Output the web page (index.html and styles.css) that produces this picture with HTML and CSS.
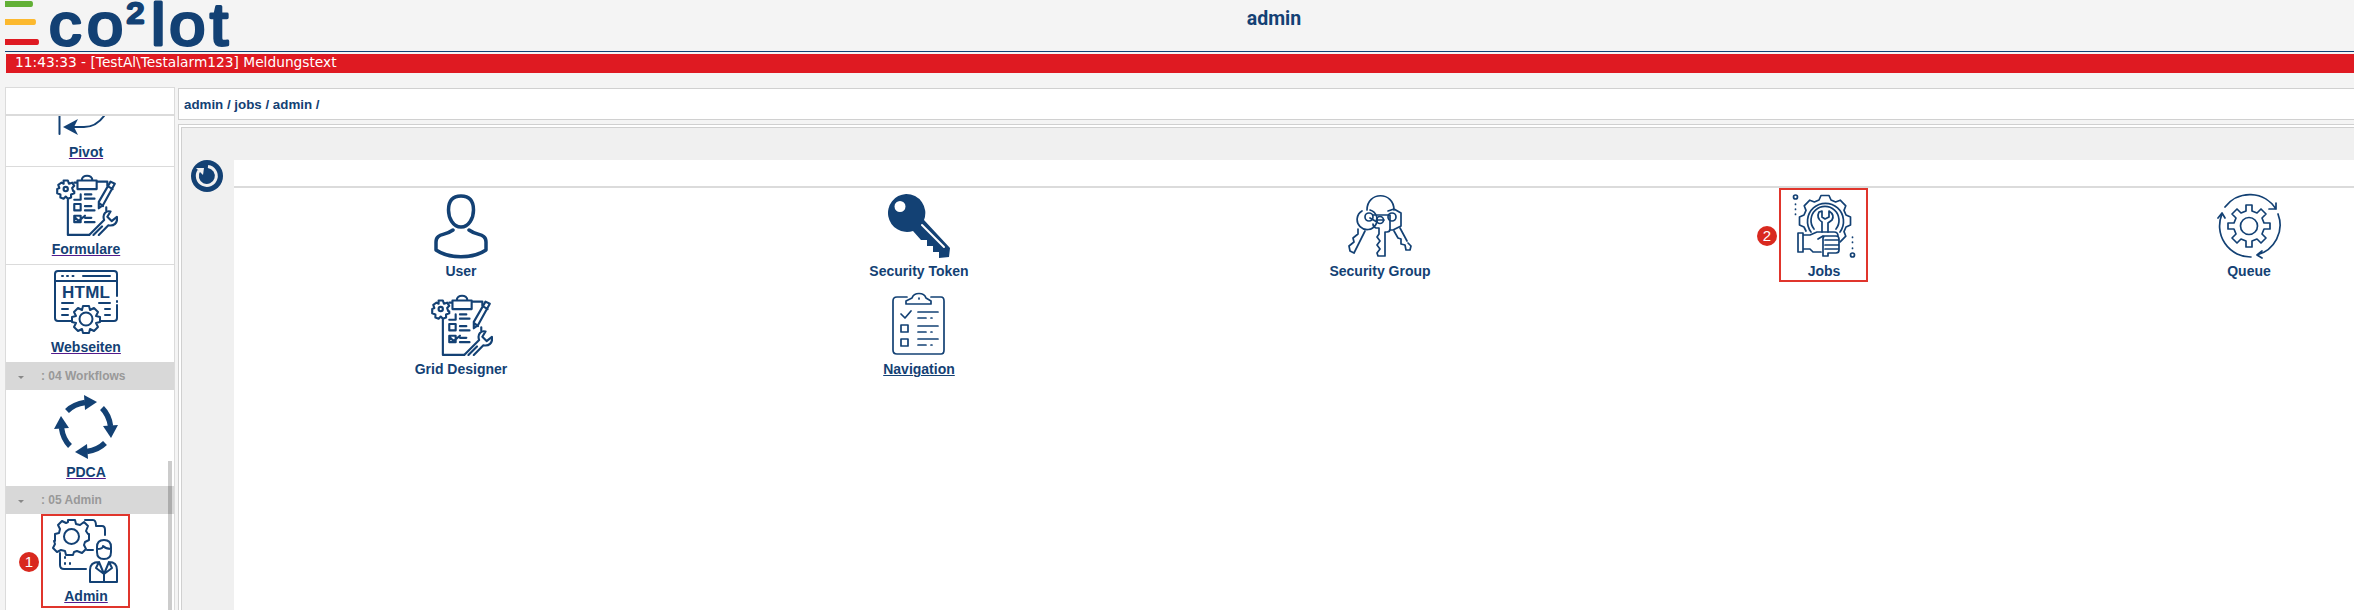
FILE: index.html
```html
<!DOCTYPE html>
<html lang="de">
<head>
    <meta charset="UTF-8">
    <meta name="viewport" content="width=device-width, initial-scale=1.0">
    <title>eco2lot - admin</title>
    <link rel="stylesheet" href="styles.css">
</head>
<body>
    <!-- Shared icons -->
    <svg class="defs" width="0" height="0">
        <symbol id="icon-form" viewBox="0 0 60 60">
            <path d="M22 8h18v8H22zM26 8c0-6 10-6 10 0M22 10h-3M40 9h10v3M13 26v33h20M49 33v3"/>
            <path d="M25 21v5h-6M19 30h6v6h-6zM19 41h6v6h-6zM20 43l3 3 6-5M29 21h6M29 25h9M29 32h6M29 36h9M29 43h6M29 47h9"/>
            <path d="M53 9l4 2-11 20-4 3 0-6zM50 13l5 3M42 29l4 3"/>
            <path d="M33 59l14-14c-2-6 2-9 6-8l-3 5 4 4 5-4c1 6-3 9-8 8L42 59M37 59l8-8"/>
            <path d="M9 8h4l1 3 3-1 2 3-2 2 1 3h1v2l-3 1 0 3-3 1-2-2-2 2-3-1v-3l-3-1v-4l2-1-1-3 3-2 2 1z"/><circle cx="11" cy="16" r="2"/>
        </symbol>
    </svg>

    <div class="header">
        <svg class="logo" width="236" height="51" viewBox="0 0 236 51">
            <path d="M5 1h26q2 0 2 3t-2 3H5z" fill="#62b036"/>
            <path d="M5 19h29q2 0 2 3t-2 3H5z" fill="#fcb92f"/>
            <path d="M5 39h32q2 0 2 3t-2 3H5z" fill="#df1a22"/>
            <g class="logo-text" transform="scale(1.1 1)">
                <text y="44.500" x="44.500 79">co</text>
                <text class="logo-sup" x="115" y="22.500">2</text>
                <text y="44.500" x="137.300 153.800 191">lot</text>
            </g>
        </svg>
        <h1>admin</h1>
    </div>
    <div class="alarm">11:43:33 - [TestAl\Testalarm123] Meldungstext</div>

    <div class="page">
        <div class="sidebar">
            <div class="sidebar-top"></div>
            <div class="nav-item nav-pivot">
                <svg class="icon" viewBox="0 0 64 64"><path d="M5.500 20v39M14 52h16c9 0 15-4 20-11"/><path class="fill" d="M9 52l15-8-4 8 4 8z"/></svg>
                <a href="#">Pivot</a>
            </div>
            <div class="nav-item">
                <svg class="icon"><use href="#icon-form"/></svg>
                <a href="#">Formulare</a>
            </div>
            <div class="nav-item nav-web">
                <svg class="icon" viewBox="0 0 64 64">
                    <path d="M18 51H4q-3 0-3-3V4q0-3 3-3h56q3 0 3 3v22M1 11h62M63 31v1M63 35v13q0 3-3 3H46M8 6h1M13 6h1M18.500 6h1M29 6h27"/>
                    <path d="M8 33h11M8 39h6M8 45h6M45 33h11M51 39h5M51 45h5"/>
                    <path d="M29 36h6l1 4 4-2 4 4-2 4 4 1v5l-4 1 2 4-4 4-4-2-1 4h-6l-1-4-4 2-4-4 2-4-4-1v-5l4-1-2-4 4-4 4 2z"/><circle cx="32" cy="49" r="6.500"/>
                    <text class="icon-text" x="8" y="28" textLength="48">HTML</text>
                </svg>
                <a href="#">Webseiten</a>
            </div>
            <div class="nav-group"><span class="caret"></span>: 04 Workflows</div>
            <div class="nav-item nav-last">
                <svg class="icon" viewBox="0 0 64 64">
                    <g id="arc"><path class="thick" d="M13 16Q20 9 31 7.500"/><path class="fill" d="M30 0l13 7-12 8z"/></g>
                    <use href="#arc" transform="rotate(90 32 32)"/>
                    <use href="#arc" transform="rotate(180 32 32)"/>
                    <use href="#arc" transform="rotate(270 32 32)"/>
                </svg>
                <a href="#">PDCA</a>
            </div>
            <div class="nav-group"><span class="caret"></span>: 05 Admin</div>
            <div class="nav-item nav-last">
                <svg class="icon" viewBox="0 0 64 64">
                    <path d="M14 1h7l1 4 4 1 4-3 4 4-2 5 2 3h1v6l-4 2-1 3 2 4-4 4-5-2-3 1-1 3h-7l-1-4-4-1-4 2-4-4 2-4-1-3H1v-7l4-1 1-4-2-4 4-4 4 2 2-1z"/><circle cx="17.500" cy="17.500" r="7.500"/>
                    <path d="M31 1h8q3 0 3 6h6q3 0 3 4v5M33 31h6M6 34v12q0 4 4 4h22M11 38v1M11 44v1M16 44v1"/>
                    <path d="M43 28q0-7 7-7t7 7v5q0 7-7 7t-7-7zM43 30q6 0 6-3 3 3 8 3"/>
                    <path d="M36 63V51q0-8 9-8l5 12 5-12q8 0 8 8v12zM45 43l-3 6 8 6 8-6-3-6M50 55v8"/>
                </svg>
                <a href="#">Admin</a>
                <div class="mark mark-admin"><span>1</span></div>
            </div>
            <div class="scroll-thumb"></div>
        </div>

        <div class="main">
            <div class="breadcrumb">admin / jobs / admin /</div>
            <div class="panel">
                <div class="panel-inner">
                    <div class="tools">
                        <svg width="32" height="32" viewBox="0 0 32 32">
                            <circle cx="16" cy="16" r="16" fill="#134174"/>
                            <path d="M17 6.500A9.500 9.500 0 1 1 8 10.500" fill="none" stroke="#f0f0f0" stroke-width="3"/>
                            <path d="M5 8l8 0-1 7z" fill="#f0f0f0"/>
                        </svg>
                    </div>
                    <div class="content">
                        <div class="content-top"></div>
                        <div class="tiles">
                            <div class="tile">
                                <svg class="icon user" viewBox="0 0 64 64"><path d="M32 2c9 0 12.500 6 12.500 14S40 33 32 33s-12.500-9-12.500-17S23 2 32 2zM24 36c-8 6-17 3-17 12v8c13 9 37 9 50 0v-8c0-9-9-6-17-12"/></svg>
                                <span>User</span>
                            </div>
                            <div class="tile">
                                <svg class="icon" viewBox="0 0 64 64"><path class="fill" fill-rule="evenodd" d="M19 0a19 19 0 0 1 18 26l26 28-1 9-10 1v-6h-6v-6h-6v-6h-6l-8-9A19 19 0 1 1 19 0zM13 7a5.500 5.500 0 1 0 0 11 5.500 5.500 0 0 0 0-11z"/><path d="M35 31l22 22" class="slot"/></svg>
                                <span>Security Token</span>
                            </div>
                            <div class="tile">
                                <svg class="icon thin" viewBox="0 0 64 64">
                                    <path d="M19 16C19-3 46-3 46 16M14 17a10 10 0 1 0 8-1M25 21h17v14q0 3-3 3h-2v24h-7l-1-3 3-4-3-4 3-4-3-4 2-3v-6h-3q-3-1-3-4M40 17l6-2 7 4v13l-8 4h-3"/>
                                    <path d="M10 35v5l-5 4 1 4-5 4 1 5 4 2 11-22M46 37l4 7 3 1v5l4 1 1 5 4 0 1-4-3-3M52 34l7 13"/>
                                    <circle cx="21" cy="23" r="4"/><circle cx="32" cy="26" r="3.500"/><circle cx="44" cy="23" r="4"/><path d="M22 24l7 4M29 26h7"/>
                                </svg>
                                <span>Security Group</span>
                            </div>
                            <div class="tile">
                                <svg class="icon thin" viewBox="0 0 64 64">
                                    <path d="M14 37l-2-4-4.500-2v-8l4.500-2 2-4.600-1.800-4.600 5.600-5.600L22.400 8 27 6l2-4.500h8L39 6l4.600 2 4.600-1.800 5.600 5.600-1.800 4.600 2 4.600 4.500 2v8L54 33l-2 4.600 1.800 4.600-5.600 5.600"/>
                                    <path d="M19 38a18 18 0 1 1 29 0M22 35a14 14 0 1 1 22 0M30 38V28q-6-4-3-10l3-1v6l3 2 4-2v-6q6 4 3 9l-4 3v9"/>
                                    <path d="M6 39h5v19H6zM11 41h7l7-3h17q4 0 4 4M11 55h7l3 3h8M31 42l-5 3"/>
                                    <path d="M32 42h12q3 0 3 3v11q0 3-3 3h-8v3h-5V44zM33 46h13M33 51h13M33 55h13"/>
                                    <circle cx="3.500" cy="3" r="2"/><circle cx="60.500" cy="61" r="2"/><path d="M3.500 10v.5M3.500 15v.5M3.500 20v.5M60.500 43v.5M60.500 48v.5M60.500 54v.5"/>
                                </svg>
                                <span>Jobs</span>
                                <div class="mark mark-jobs"><span>2</span></div>
                            </div>
                            <div class="tile">
                                <svg class="icon thin" viewBox="0 0 64 64">
                                    <path d="M8 13A31 31 0 0 1 59 15M59 9v6h-7M61 20A31 31 0 0 1 40 61M45 57l-5 4 5 3M34 63A31 31 0 0 1 5 20M1 24l4-5 3 5"/>
                                    <path d="M29 11h6v6l5 2 4-4 5 5-4 4 2 5h6v6h-6l-2 5 4 4-5 5-4-4-5 2v6h-6v-6l-5-2-4 4-5-5 4-4-2-5h-6v-6h6l2-5-4-4 5-5 4 4 5-2z"/><circle cx="32" cy="32" r="8.500"/>
                                </svg>
                                <span>Queue</span>
                            </div>
                            <div class="tile">
                                <svg class="icon"><use href="#icon-form"/></svg>
                                <span>Grid Designer</span>
                            </div>
                            <div class="tile">
                                <svg class="icon thin" viewBox="0 0 64 64">
                                    <path d="M20 5H10q-4 0-4 4v49q0 4 4 4h44q3 0 3-4V9q0-4-3-4H44M19 12V9l6-3c2-6 12-6 14 0l5 3v3zM32 6v1"/>
                                    <path d="M14 22l4 4 6-7M14 33h7v7h-7zM14 47h7v7h-7zM31 20h20M31 26h8M44 26h1M31 34h20M31 40h8M44 40h1M31 47h20M31 53h8M44 53h1"/>
                                </svg>
                                <span class="linked">Navigation</span>
                            </div>
                        </div>
                    </div>
                </div>
            </div>
        </div>
    </div>
</body>
</html>
```
FILE: styles.css
```css
/* Global Styles */
* {
    box-sizing: border-box;
}

body {
    margin: 0;
    height: 610px;
    overflow: hidden;
    background-color: #f4f4f4;
    font-family: "Liberation Sans", Arial, sans-serif;
    font-weight: bold;
    color: #134174;
}

.defs {
    display: none;
}

/* Header */
.header {
    display: grid;
    grid-template-columns: 236px 1fr;
    height: 52px;
    margin-left: 5px;
    border-bottom: 1px solid #134174;
}

.logo {
    margin-left: -5px;
}

.logo-text {
    font-size: 59px;
    font-weight: normal;
    fill: #134174;
    stroke: #134174;
    stroke-width: 3px;
    stroke-linejoin: round;
}

.logo-sup {
    font-size: 29px;
}

h1 {
    margin: 9px 0 0;
    padding-right: 47px;
    font-family: Roboto, sans-serif;
    font-size: 19.5px;
    line-height: 20px;
    text-align: center;
}

.alarm {
    height: 19px;
    margin: 2px 0 0 6px;
    padding-left: 9px;
    background-color: #df1a22;
    color: #fff;
    font-family: "DejaVu Sans", Verdana, sans-serif;
    font-size: 13.75px;
    font-weight: normal;
    line-height: 17px;
}

/* Page */
.page {
    display: flex;
    gap: 3px;
    height: 523px;
    margin: 14px 0 0 5px;
    overflow: hidden;
}

.sidebar {
    position: relative;
    flex: none;
    width: 170px;
    background-color: #fff;
    border: 1px solid #dbdbdb;
    border-bottom: none;
}

.sidebar-top {
    height: 28px;
    border-bottom: 2px solid #dbdbdb;
}

.nav-item {
    position: relative;
    display: flex;
    flex-direction: column;
    align-items: center;
    height: 98px;
    padding: 5px 8px 0 0;
    border-bottom: 1px solid #dbdbdb;
}

.nav-item a {
    margin-top: 5px;
    font-size: 14px;
    line-height: 16px;
    color: #134174;
    text-decoration: underline;
    text-decoration-color: #551a8b;
    text-decoration-thickness: 1px;
}

.nav-pivot {
    justify-content: flex-end;
    height: 51px;
    padding: 0 8px 6px 0;
    overflow: hidden;
}

.nav-web {
    height: 97px;
    border-bottom: none;
}

.nav-last {
    height: 96px;
    border-bottom: none;
}

.nav-group {
    display: flex;
    align-items: center;
    height: 28px;
    padding-left: 12px;
    background-color: #d8d8d8;
    color: #999;
    font-size: 12px;
}

.caret {
    width: 6px;
    height: 3px;
    margin: 3px 17px 0 0;
    background-color: #888;
    clip-path: polygon(0 0, 100% 0, 50% 100%);
}

.scroll-thumb {
    position: absolute;
    top: 373px;
    right: 2px;
    bottom: 0;
    width: 4px;
    background-color: rgba(0, 0, 0, 0.2);
}

/* Icons */
.icon {
    flex: none;
    width: 64px;
    height: 64px;
    overflow: visible;
    fill: none;
    stroke: #134174;
    stroke-width: 2;
    stroke-linecap: round;
    stroke-linejoin: round;
}

.icon .fill {
    fill: #134174;
    stroke: none;
}

.icon .thick {
    stroke-width: 5.5;
    stroke-linecap: butt;
}

.icon .slot {
    stroke: #fff;
}

.icon-text {
    font-size: 17px;
    font-weight: bold;
    fill: #134174;
    stroke: none;
}

.thin {
    stroke-width: 1.7;
}

.user {
    stroke-width: 3.5;
}

/* Main */
.main {
    display: flex;
    flex: 1;
    flex-direction: column;
    min-width: 0;
}

.breadcrumb {
    flex: none;
    height: 32px;
    margin-top: 1px;
    padding-left: 5px;
    background-color: #fff;
    border: 1px solid #d0d0d0;
    border-right: none;
    font-size: 13.33px;
    line-height: 32px;
}

.panel {
    flex: 1;
    margin-top: 4px;
    padding: 2px 0 0 2px;
    background-color: #fff;
    border: 1px solid #d0d0d0;
    border-width: 1px 0 0 1px;
}

.panel-inner {
    display: flex;
    height: 100%;
    padding-top: 32px;
    background-color: #f0f0f0;
    border: 1px solid #d0d0d0;
    border-width: 1px 0 0 1px;
}

.tools {
    flex: none;
    width: 52px;
    padding-left: 9px;
}

.content {
    flex: 1;
    min-width: 0;
    overflow: hidden;
    background-color: #fff;
}

.content-top {
    height: 28px;
    border-bottom: 2px solid #dbdbdb;
}

.tiles {
    display: grid;
    grid-template-columns: 454px 462px 460px 428px 422px;
    grid-auto-rows: 98px;
}

.tile {
    position: relative;
    display: flex;
    flex-direction: column;
    align-items: center;
    padding-top: 6px;
    font-size: 14px;
    line-height: 16px;
}

.tile > span {
    margin-top: 5px;
}

.linked {
    text-decoration: underline;
    text-decoration-thickness: 1px;
}

/* Numbered marks */
.mark {
    position: absolute;
    width: 89px;
    height: 94px;
    border: 2px solid #e0352c;
}

.mark span {
    position: absolute;
    top: 36px;
    left: -24px;
    width: 20px;
    height: 20px;
    border-radius: 50%;
    background-color: #d9291f;
    color: #fff;
    font-size: 15px;
    font-weight: normal;
    line-height: 20px;
    text-align: center;
}

.mark-admin {
    top: 0;
    left: 35px;
}

.mark-jobs {
    top: 0;
    left: 169px;
}
```
